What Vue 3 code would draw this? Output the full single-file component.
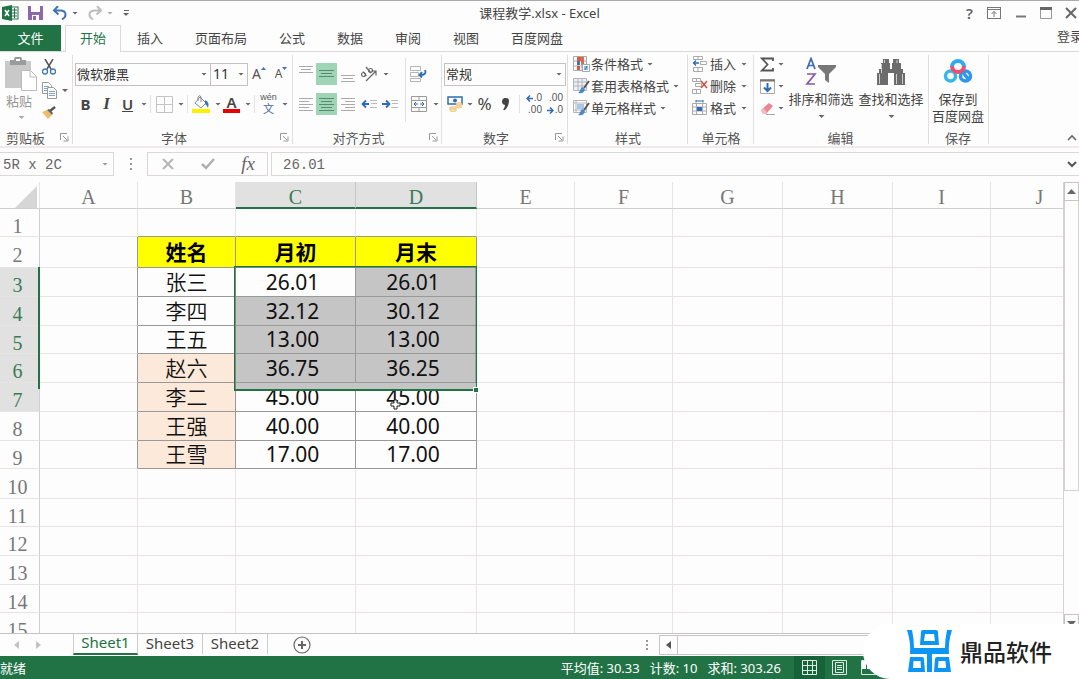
<script setup>
import { ref } from 'vue'

const tabs = ['插入', '页面布局', '公式', '数据', '审阅', '视图', '百度网盘']

const columns = [
  { name: 'A', width: 98 },
  { name: 'B', width: 98 },
  { name: 'C', width: 120 },
  { name: 'D', width: 121 },
  { name: 'E', width: 98 },
  { name: 'F', width: 98 },
  { name: 'G', width: 110 },
  { name: 'H', width: 110 },
  { name: 'I', width: 98 },
  { name: 'J', width: 98 }
]

const heights = [28, 31, 29, 29, 28, 29, 29, 29, 28, 30, 28, 29, 29, 28, 29]

const records = {
  2: ['姓名', '月初', '月末'],
  3: ['张三', '26.01', '26.01'],
  4: ['李四', '32.12', '30.12'],
  5: ['王五', '13.00', '13.00'],
  6: ['赵六', '36.75', '36.25'],
  7: ['李二', '45.00', '45.00'],
  8: ['王强', '40.00', '40.00'],
  9: ['王雪', '17.00', '17.00']
}

const rows = heights.map((height, i) => ({ n: i + 1, height }))

const fontName = ref('微软雅黑')
const fontSize = ref('11')
const numberFormat = ref('常规')
const nameBox = ref('5R x 2C')
const formula = ref('26.01')

function cellText(n, c) {
  const r = records[n]
  return r && c >= 1 && c <= 3 ? r[c - 1] : ''
}

function cellClass(n, c) {
  const inTable = n >= 2 && n <= 9
  return {
    title: n === 2 && c >= 1 && c <= 3,
    peach: c === 1 && n >= 6 && n <= 9,
    number: c >= 2 && c <= 3 && n > 2,
    picked: (c === 3 && n >= 3 && n <= 6) || (c === 2 && n >= 4 && n <= 6),
    'dark-right': inTable && c <= 3,
    'dark-bottom': c >= 1 && c <= 3 && n <= 9
  }
}
</script>

<template>
  <div class="excel">
    <header class="titlebar">
      <div class="quick">
        <svg class="q-logo" width="17" height="16" viewBox="0 0 17 16">
          <rect x="8" y="2" width="8" height="12" fill="#fff" stroke="#217346" />
          <path d="M9 5h6M9 8h6M9 11h6M12.5 3v10" stroke="#217346" />
          <path d="M0 2L10 0v16L0 14z" fill="#217346" />
          <path d="M3 5l4 6M7 5l-4 6" stroke="#fff" stroke-width="1.5" />
        </svg>
        <button aria-label="保存">
          <svg width="15" height="14" viewBox="0 0 15 14">
            <path d="M0 0h15v14H0z" fill="#8d67ac" />
            <path d="M3 0h9v6H3zM4 9h7v5H4z" fill="#fff" />
            <path d="M5 10h3v4H5z" fill="#8d67ac" />
          </svg>
        </button>
        <button aria-label="撤消">
          <svg width="16" height="15" viewBox="0 0 16 15">
            <path d="M6 0L2 4.500l4.500 4M2 4.500h6c7 0 7 6 2 9" fill="none" stroke="#3c76b8" stroke-width="2" />
          </svg>
        </button>
        <i class="caret"></i>
        <button aria-label="恢复" class="redo">
          <svg width="16" height="15" viewBox="0 0 16 15">
            <path d="M10 0l4 4.500-4.500 4M14 4.500H8c-7 0-7 6-2 9" fill="none" stroke="#bcbcbc" stroke-width="2" />
          </svg>
        </button>
        <i class="caret pale"></i>
        <span class="more"><i class="caret"></i></span>
      </div>
      <h1>课程教学.xlsx - Excel</h1>
      <div class="window-buttons">
        <button aria-label="帮助" class="help">?</button>
        <button aria-label="功能区显示选项">
          <svg width="16" height="12" viewBox="0 0 16 12" fill="none" stroke="#777">
            <rect x="1.500" y=".5" width="13" height="11" /><path d="M2 2.500h12M8 10V4.500M5.500 7L8 4.500 10.500 7" />
          </svg>
        </button>
        <button aria-label="最小化">
          <svg width="12" height="12" viewBox="0 0 12 12"><path d="M1 9.500h10" stroke="#777" stroke-width="2" /></svg>
        </button>
        <button aria-label="最大化">
          <svg width="12" height="12" viewBox="0 0 12 12"><path d="M.5 1v10.500h11V1" fill="none" stroke="#999" /><path d="M0 1.500h12" stroke="#666" stroke-width="3" /></svg>
        </button>
        <button aria-label="关闭">
          <svg width="12" height="12" viewBox="0 0 12 12"><path d="M1 1l10 10M11 1L1 11" stroke="#666" stroke-width="2" /></svg>
        </button>
      </div>
    </header>

    <nav class="tabs">
      <button class="file">文件</button>
      <button class="active">开始</button>
      <button v-for="t in tabs" :key="t">{{ t }}</button>
      <a href="#" class="login">登录</a>
    </nav>

    <section class="ribbon">
      <div class="group clipboard">
        <div class="body">
          <button class="paste">
            <svg width="32" height="35" viewBox="0 0 32 35">
              <path d="M0 4h26v27H0z" fill="#c9c9c9" />
              <path d="M5 3h4a4 4 0 0 1 8 0h4v5H5z" fill="#9b9b9b" /><path d="M11 2h4v2h-4z" fill="#fff" />
              <path d="M16.500 13.500h9l6 6v14h-15z" fill="#fff" stroke="#bbb" /><path d="M25 13v7h6" fill="none" stroke="#bbb" />
            </svg>
            <span>粘贴</span>
            <i class="caret pale"></i>
          </button>
          <div class="clip-tools">
            <button aria-label="剪切">
              <svg width="14" height="16" viewBox="0 0 14 16" fill="none">
                <path d="M3 0l6 10M11 0L5 10" stroke="#555" stroke-width="1.500" />
                <circle cx="3" cy="12.500" r="2.500" stroke="#3c76b8" stroke-width="1.300" /><circle cx="11" cy="12.500" r="2.500" stroke="#3c76b8" stroke-width="1.300" />
              </svg>
            </button>
            <button aria-label="复制">
              <svg width="15" height="17" viewBox="0 0 15 17" stroke="#9a9a9a">
                <path d="M.5.5h6l3 3v8h-9z" fill="#fff" /><path d="M2 4.500h5M2 6.500h5M2 8.500h5" stroke="#7fa6d0" />
                <path d="M5.500 5.500h6l3 3v8h-9z" fill="#fff" /><path d="M7 9.500h6M7 11.500h6M7 13.500h6" stroke="#7fa6d0" />
              </svg>
            </button>
            <button aria-label="格式刷">
              <svg width="14" height="13" viewBox="0 0 14 13">
                <path d="M0 6l5-2 5 5-4 4z" fill="#edbd68" /><path d="M5 4l2-1 4 4-1 2z" fill="#666" /><path d="M8 5l5-4" stroke="#555" stroke-width="2.500" />
              </svg>
            </button>
          </div>
          <i class="caret copy-caret"></i>
        </div>
        <footer>剪贴板<svg class="launch" viewBox="0 0 9 9"><path d="M.5 7V.5H7M3 3l4 4M8 3.500V8H3.500" /></svg></footer>
      </div>

      <div class="group font">
        <div class="body lines">
          <div class="line">
            <label class="drop font-name"><select v-model="fontName" aria-label="字体"><option>微软雅黑</option></select><i class="caret"></i></label>
            <label class="drop font-size"><select v-model="fontSize" aria-label="字号"><option>11</option></select><i class="caret"></i></label>
            <button class="grow" aria-label="增大字号">A<svg width="5" height="3" viewBox="0 0 5 3"><path d="M0 3l2.500-3L5 3z" fill="#3c76b8" /></svg></button>
            <button class="grow small" aria-label="减小字号">A<svg width="5" height="3" viewBox="0 0 5 3"><path d="M0 0h5L2.500 3z" fill="#3c76b8" /></svg></button>
          </div>
          <div class="line">
            <button class="w21 bold">B</button>
            <button class="w21 italic">I</button>
            <button class="w21 under">U</button>
            <i class="caret"></i><i class="sep"></i>
            <button class="w21" aria-label="边框">
              <svg width="17" height="17" viewBox="0 0 17 17" fill="none" stroke="#c4c4c4"><path d="M.5.5h16v16H.5zM8.500 1v15M1 8.500h15" /></svg>
            </button>
            <i class="caret"></i><i class="sep"></i>
            <button class="w21" aria-label="填充颜色">
              <svg width="19" height="18" viewBox="0 0 19 18">
                <path d="M0 14h18v4H0z" fill="#fdf000" /><path d="M8 2l6 6-5 5-6-5z" fill="#fff" stroke="#888" /><path d="M6 6V2q2-3 3 0v5" fill="none" stroke="#888" />
                <path d="M13 5q5 2 3 8-1-3-3-4z" fill="#3c76b8" />
              </svg>
            </button>
            <i class="caret"></i>
            <button class="w21 color" aria-label="字体颜色">A</button>
            <i class="caret"></i><i class="sep"></i>
            <button class="w21 pinyin"><small>wén</small><span>文</span></button>
            <i class="caret"></i>
          </div>
        </div>
        <footer>字体<svg class="launch" viewBox="0 0 9 9"><path d="M.5 7V.5H7M3 3l4 4M8 3.500V8H3.500" /></svg></footer>
      </div>

      <div class="group align">
        <div class="body">
          <div class="lines">
            <div class="line">
              <button class="w21" aria-label="顶端对齐"><svg width="14" height="16" viewBox="0 0 14 16" stroke="#aaa"><path d="M0 .5h14M2 3.500h10M0 6.500h14" /></svg></button>
              <button class="w21 on" aria-label="垂直居中"><svg width="15" height="16" viewBox="0 0 15 16" stroke="#5c8a70"><path d="M0 4.500h15M2 7.500h11M0 10.500h15" /></svg></button>
              <button class="w21" aria-label="底端对齐"><svg width="14" height="16" viewBox="0 0 14 16" stroke="#aaa"><path d="M0 9.500h14M2 12.500h10M0 15.500h14" /></svg></button>
              <button class="w21" aria-label="方向">
                <svg width="18" height="16" viewBox="0 0 18 16" fill="none" stroke="#666" stroke-width="1.200">
                  <path d="M6 15L16 5M11.500 5H16v4.500" /><circle cx="3.500" cy="8.500" r="2" /><path d="M3 5.500l3.500 4.500M6 1l5 6" /><circle cx="10.500" cy="4.500" r="2" />
                </svg>
              </button>
              <i class="caret"></i>
            </div>
            <div class="line">
              <button class="w21" aria-label="左对齐"><svg width="14" height="14" viewBox="0 0 14 14" stroke="#aaa"><path d="M0 1.500h14M0 4.500h10M0 7.500h14M0 10.500h10M0 13.500h14" /></svg></button>
              <button class="w21 on" aria-label="居中"><svg width="15" height="14" viewBox="0 0 15 14" stroke="#5c8a70"><path d="M0 1.500h15M2 4.500h11M0 7.500h15M2 10.500h11M0 13.500h15" /></svg></button>
              <button class="w21" aria-label="右对齐"><svg width="14" height="14" viewBox="0 0 14 14" stroke="#aaa"><path d="M0 1.500h14M4 4.500h10M0 7.500h14M4 10.500h10M0 13.500h14" /></svg></button>
              <button class="w21" aria-label="减少缩进量"><svg width="16" height="10" viewBox="0 0 16 10" fill="none"><path d="M8 5H2M5 1.500L1.500 5 5 8.500" stroke="#2f6cb3" stroke-width="1.800" /><path d="M9 1.500h7M10 4.500h6M9 8.500h7" stroke="#bbb" /></svg></button>
              <button class="w21" aria-label="增加缩进量"><svg width="16" height="10" viewBox="0 0 16 10" fill="none"><path d="M0 5h7M4 1.500L7.500 5 4 8.500" stroke="#2f6cb3" stroke-width="1.800" /><path d="M9 1.500h7M10 4.500h6M9 8.500h7" stroke="#bbb" /></svg></button>
            </div>
          </div>
          <div class="lines wrap-block">
            <div class="line">
              <button class="w21" aria-label="自动换行">
                <svg width="17" height="16" viewBox="0 0 17 16" fill="none"><path d="M.5.500h10v4H.5zM.5 6.500h8v4h-8zM.5 12.500h10v3H.5z" stroke="#b4b4b4" /><path d="M15 4q2 5-5 5M12 6L9.500 9l2.500 2.500" stroke="#2f6cb3" stroke-width="1.800" /></svg>
              </button>
            </div>
            <div class="line">
              <button class="w21" aria-label="合并后居中">
                <svg width="16" height="16" viewBox="0 0 16 16" fill="none"><path d="M.5.5h15v15H.5zM1 4.500h14M1 11.500h14M8 1v3M8 12v3" stroke="#9a9a9a" /><path d="M3 8h4M9 8h4M5 6L3 8l2 2M11 6l2 2-2 2" stroke="#2f6cb3" /></svg>
              </button>
              <i class="caret"></i>
            </div>
          </div>
        </div>
        <footer>对齐方式<svg class="launch" viewBox="0 0 9 9"><path d="M.5 7V.5H7M3 3l4 4M8 3.500V8H3.500" /></svg></footer>
      </div>

      <div class="group numbers">
        <div class="body lines">
          <div class="line">
            <label class="drop format"><select v-model="numberFormat" aria-label="数字格式"><option>常规</option></select><i class="caret"></i></label>
          </div>
          <div class="line">
            <button class="w21" aria-label="会计数字格式">
              <svg width="16" height="16" viewBox="0 0 16 16"><path d="M1 1h14v7H1z" fill="#fff" stroke="#2f6cb3" stroke-width="1.500" /><circle cx="8" cy="4.500" r="2" fill="#2f6cb3" /><g fill="#f9dfa8" stroke="#e8b967" stroke-width=".6"><ellipse cx="12" cy="8" rx="3" ry="1.500" /><ellipse cx="12" cy="10.500" rx="3" ry="1.500" /><ellipse cx="6" cy="12" rx="3.500" ry="1.500" /><ellipse cx="6" cy="14" rx="3.500" ry="1.500" /></g></svg>
            </button>
            <i class="caret tight"></i>
            <button class="w21 percent">%</button>
            <button class="w21" aria-label="千位分隔样式"><svg width="8" height="12" viewBox="0 0 8 12"><path d="M4 0a3 3 0 0 1 3 3c0 4-2 7-4 9H1c1-2 2-3 2-5a3.200 3.200 0 0 1 1-7" fill="#444" /></svg></button>
            <i class="sep"></i>
            <button class="w21 decimals">
              <span><svg width="7" height="7" viewBox="0 0 7 7" fill="none"><path d="M7 3.500H1.500M4 .5l-3 3 3 3" stroke="#2f6cb3" stroke-width="1.500" /></svg>.0</span><span>.00</span>
            </button>
            <button class="w21 decimals">
              <span>.00</span><span><svg width="7" height="7" viewBox="0 0 7 7" fill="none"><path d="M0 3.500h5.500M3 .5l3 3-3 3" stroke="#2f6cb3" stroke-width="1.500" /></svg>.0</span>
            </button>
          </div>
        </div>
        <footer>数字<svg class="launch" viewBox="0 0 9 9"><path d="M.5 7V.5H7M3 3l4 4M8 3.500V8H3.500" /></svg></footer>
      </div>

      <div class="group styles">
        <div class="body stack">
          <button>
            <svg width="17" height="16" viewBox="0 0 17 16"><path d="M.5.5h13v14H.5zM1 5h12M1 10h12M5 1v13M9 1v13" fill="#fff" stroke="#aaa" /><path d="M4 1h4v4H4zM4 10h3v4H4z" fill="#df5a3c" /><path d="M8 1h3v8H8z" fill="#d56a55" /><path d="M4 5h3v4H4z" fill="#3f75b5" /><path d="M9.500 8.500h7v7h-7z" fill="#fff" stroke="#9ab" /><path d="M11 11h4M11 13h4M14 10l-2 4" stroke="#3f75b5" /></svg>
            <span>条件格式</span><i class="caret"></i>
          </button>
          <button>
            <svg width="17" height="16" viewBox="0 0 17 16"><path d="M.5.5h13v12H.5zM1 4h12M1 8h12M5 1v11M9 1v11" fill="#e9f0f8" stroke="#b4b4b4" /><path d="M16 3l-5 7" stroke="#555" stroke-width="2" /><path d="M9 9l3 2c-1 4-3 5-7 4 2-1 2-4 4-6" fill="#4d89c4" /></svg>
            <span>套用表格格式</span><i class="caret"></i>
          </button>
          <button>
            <svg width="17" height="16" viewBox="0 0 17 16"><path d="M.5.5h13v12H.5zM1 3h12M1 10h12M3 1v11" fill="#fff" stroke="#b4b4b4" /><path d="M4 4h7v5H4z" fill="#a9c7e6" /><path d="M16 3l-5 7" stroke="#555" stroke-width="2" /><path d="M9 9l3 2c-1 4-3 5-7 4 2-1 2-4 4-6" fill="#4d89c4" /></svg>
            <span>单元格样式</span><i class="caret"></i>
          </button>
        </div>
        <footer>样式</footer>
      </div>

      <div class="group cells">
        <div class="body stack">
          <button>
            <svg width="16" height="16" viewBox="0 0 16 16" fill="none"><path d="M1.500.5h9v3h-9zM6 1v3M1.500 11.500h9v4h-9zM6 12v4M8.500 5.500h6v3h-6z" stroke="#aaa" /><path d="M7 7H1M4 4.500L1.500 7 4 9.500" stroke="#2f6cb3" stroke-width="1.300" /></svg>
            <span>插入</span><i class="caret"></i>
          </button>
          <button>
            <svg width="16" height="16" viewBox="0 0 16 16" fill="none"><path d="M.5.5h8v3h-8zM4.500 1v3M.5 11.500h8v4h-8zM4.500 12v4M3.500 5.500h6v3h-6z" stroke="#aaa" /><path d="M9 3l6 7M15 3L9 10" stroke="#d94b3d" stroke-width="1.500" /></svg>
            <span>删除</span><i class="caret"></i>
          </button>
          <button>
            <svg width="16" height="16" viewBox="0 0 16 16" fill="none"><path d="M.5 3.500h14v11H.5zM1 7h14M1 11h14M4.500 4v10M10.500 4v10" stroke="#aaa" /><path d="M5 7h5v4H5z" fill="#2f6cb3" /><path d="M4 1h7M4 0v2.500M11 0v2.500" stroke="#2f6cb3" /></svg>
            <span>格式</span><i class="caret"></i>
          </button>
        </div>
        <footer>单元格</footer>
      </div>

      <div class="group edit">
        <div class="body">
          <div class="stack">
            <button aria-label="自动求和"><svg width="15" height="15" viewBox="0 0 15 15"><path d="M13 4V1.500H2L7.500 7.500 2 13.500h11V11" fill="none" stroke="#555" stroke-width="1.800" /></svg><i class="caret"></i></button>
            <button aria-label="填充"><svg width="15" height="15" viewBox="0 0 15 15" fill="none"><path d="M.5.5h14v14H.5z" stroke="#aaa" /><path d="M0 1.500h15" stroke="#777" stroke-width="2" /><path d="M7.500 4v8M4 8.500L7.500 12 11 8.500" stroke="#2f6cb3" stroke-width="2" /></svg><i class="caret"></i></button>
            <button aria-label="清除"><svg width="15" height="13" viewBox="0 0 15 13"><path d="M1 8l8-7 4 3-7 8H3z" fill="#ea8791" /><path d="M1 8l2-2 4 4-2 2H3z" fill="#f6bcc2" /><path d="M6 12.500h9" stroke="#aaa" /></svg><i class="caret"></i></button>
          </div>
          <button class="big">
            <svg width="32" height="30" viewBox="0 0 32 30" fill="none">
              <path d="M2 12L6 1.500 10 12M3.500 8.500h5" stroke="#3c68b2" stroke-width="1.700" /><path d="M2 17h8L2 27h8" stroke="#8a56a8" stroke-width="1.700" />
              <path d="M13 8h18v2l-7 7v9l-4-3v-6l-7-7z" fill="#777" />
            </svg>
            <span>排序和筛选</span><i class="caret"></i>
          </button>
          <button class="big">
            <svg width="30" height="30" viewBox="0 0 30 30">
              <path d="M7 2h6v4h1v6h2V6h1V2h6v4h2v6h2v4h2v12H18V16h-6v12H1V16h2v-4h2V6h2z" fill="#6c6c6c" /><path d="M3.500 17v10M5.500 7v9M8.500 3v3M20.500 17v10M26.500 17v10M21 3v3" stroke="#ccc" />
            </svg>
            <span>查找和选择</span><i class="caret"></i>
          </button>
        </div>
        <footer>编辑</footer>
      </div>

      <div class="group save">
        <div class="body">
          <button class="big">
            <svg width="30" height="30" viewBox="0 0 30 30" fill="none" stroke-width="3.500">
              <path d="M9 10a6 6 0 0 1 12 0" stroke="#2eaaf0" stroke-width="4" /><circle cx="7.500" cy="19" r="5" stroke="#35b8e8" /><circle cx="22.500" cy="19" r="5" stroke="#2d96ee" />
              <path d="M19 14l7 9" stroke="#2d96ee" /><path d="M21 9a6 6 0 0 1-12 0" stroke="#ee4f6e" stroke-width="4" />
            </svg>
            <span>保存到<br>百度网盘</span>
          </button>
        </div>
        <footer>保存</footer>
      </div>

      <button class="collapse" aria-label="折叠功能区"><svg width="10" height="7" viewBox="0 0 10 7"><path d="M1 6l4-4 4 4" fill="none" stroke="#666" stroke-width="1.600" /></svg></button>
    </section>

    <section class="formula-bar">
      <label class="name-box"><input v-model="nameBox" aria-label="名称框"><i class="caret"></i></label>
      <span class="dots"><svg width="2" height="12" viewBox="0 0 2 12"><path d="M0 1h2M0 6h2M0 11h2" stroke="#999" stroke-width="2" /></svg></span>
      <div class="fx">
        <button aria-label="取消"><svg width="12" height="12" viewBox="0 0 12 12"><path d="M1 1l10 10M11 1L1 11" stroke="#b5b5b5" stroke-width="2" /></svg></button>
        <button aria-label="输入"><svg width="14" height="12" viewBox="0 0 14 12"><path d="M1 6l4 4 8-9" fill="none" stroke="#b0b0b0" stroke-width="2.500" /></svg></button>
        <button class="fn">fx</button>
      </div>
      <input v-model="formula" class="formula" aria-label="编辑栏">
      <button class="expand" aria-label="展开编辑栏"><svg width="10" height="7" viewBox="0 0 10 7"><path d="M1 1l4 4 4-4" fill="none" stroke="#555" stroke-width="2" /></svg></button>
    </section>

    <main class="sheet-area">
      <div class="sheet">
        <table>
          <colgroup>
            <col class="row-col">
            <col v-for="c in columns" :key="c.name" :style="{ width: c.width + 'px' }">
          </colgroup>
          <thead>
            <tr>
              <th class="corner"><svg width="22" height="22" viewBox="0 0 22 22"><path d="M22 0v22H0z" fill="#d6d6d6" /></svg></th>
              <th v-for="c in columns" :key="c.name" :class="{ chosen: c.name === 'C' || c.name === 'D' }">{{ c.name }}</th>
            </tr>
          </thead>
          <tbody>
            <tr v-for="r in rows" :key="r.n" :style="{ height: r.height + 'px' }">
              <th :class="{ chosen: r.n >= 3 && r.n <= 7 }">{{ r.n }}</th>
              <td v-for="(c, i) in columns" :key="c.name" :class="cellClass(r.n, i)">{{ cellText(r.n, i) }}</td>
            </tr>
          </tbody>
        </table>
        <div class="row-marker"></div>
        <div class="selection"><div class="strip"></div><div class="handle"></div></div>
        <svg class="cursor" width="11" height="11" viewBox="0 0 11 11"><path d="M4 1h3v3h3v3H7v3H4V7H1V4h3z" fill="#fff" stroke="#222" /></svg>
      </div>
      <div class="vscroll">
        <button aria-label="向上滚动"><svg width="9" height="5" viewBox="0 0 9 5"><path d="M0 5l4.500-5L9 5z" fill="#666" /></svg></button>
        <div class="thumb"></div>
        <button class="down" aria-label="向下滚动"><svg width="9" height="5" viewBox="0 0 9 5"><path d="M0 0h9L4.500 5z" fill="#666" /></svg></button>
      </div>
    </main>

    <section class="sheet-tabs">
      <div class="arrows">
        <svg width="5" height="8" viewBox="0 0 5 8"><path d="M5 0v8L0 4z" fill="#c2c2c2" /></svg>
        <svg width="5" height="8" viewBox="0 0 5 8"><path d="M0 0v8l5-4z" fill="#c2c2c2" /></svg>
      </div>
      <button class="current">Sheet1</button>
      <button>Sheet3</button>
      <button>Sheet2</button>
      <button class="add" aria-label="新工作表"><svg width="18" height="18" viewBox="0 0 18 18" fill="none" stroke="#666"><circle cx="9" cy="9" r="8" stroke-width="1.200" /><path d="M9 5v8M5 9h8" stroke-width="2" /></svg></button>
      <span class="grip"><svg width="2" height="10" viewBox="0 0 2 10"><path d="M0 1h2M0 5h2M0 9h2" stroke="#999" stroke-width="2" /></svg></span>
      <div class="hscroll">
        <button aria-label="向左滚动"><svg width="5" height="8" viewBox="0 0 5 8"><path d="M5 0v8L0 4z" fill="#555" /></svg></button>
      </div>
    </section>

    <footer class="status">
      <span class="ready">就绪</span>
      <span>平均值: 30.33</span>
      <span>计数: 10</span>
      <span>求和: 303.26</span>
      <div class="views">
        <button class="current" aria-label="普通"><svg width="15" height="15" viewBox="0 0 15 15" fill="none" stroke="#dcebe2"><path d="M.5.5h14v14H.5zM1 5.500h13M1 10.500h13M5.500 1v13M10.500 1v13" /></svg></button>
        <button aria-label="页面布局"><svg width="15" height="15" viewBox="0 0 15 15" fill="none" stroke="#dcebe2"><path d="M.5.5h14v14H.5zM3.500 2.500h8v10h-8zM5 5.500h5M5 7.500h5M5 9.500h5" /></svg></button>
        <button aria-label="分页预览"><svg width="15" height="15" viewBox="0 0 15 15" fill="none"><path d="M.5.5h14v14H.5z" stroke="#dcebe2" /><path d="M1 1h4v8H1zM6 1h4v8H6z" fill="#fff" /></svg></button>
      </div>
    </footer>

    <div class="brand">
      <svg width="45" height="43" viewBox="0 0 45 43" fill="#0b95f5">
        <path d="M0 0h5q2 9 2 18h31q0-9 2-18h5q-4 12-3 24H25v18h-5V24H3Q4 12 0 0z" />
        <path fill-rule="evenodd" d="M16 0h13q2 0 2 2l1 13H13l1-13q0-2 2-2zM18 4l-1 7h11l-1-7z" />
        <path fill-rule="evenodd" d="M3 27h12q2 0 2 2l1 13H1zM6.500 31L6 38h8l-.5-7z" />
        <path fill-rule="evenodd" d="M30 27h12l2 15H27l1-13q0-2 2-2zM31.500 31l-.5 7h8l-.5-7z" />
      </svg>
      <strong>鼎品软件</strong>
    </div>
  </div>
</template>

<style>
body { margin: 0; overflow: hidden; }
</style>

<style scoped>
.excel {
  position: relative;
  display: flex;
  flex-direction: column;
  height: 100vh;
  overflow: hidden;
  box-sizing: border-box;
  border-top: 1px solid #aaa;
  background: #fdfdfd;
  color: #444;
  font: 13px/18px "Noto Sans", "Noto Sans CJK SC", sans-serif;
}
.excel * { box-sizing: border-box; }
button, input, select {
  margin: 0;
  padding: 0;
  border: 0;
  background: none;
  color: inherit;
  font: inherit;
}
button {
  display: flex;
  align-items: center;
  justify-content: center;
  flex: none;
  white-space: nowrap;
}
svg { display: block; flex: none; }
.caret {
  flex: none;
  width: 13px;
  height: 3px;
  background: #666;
  clip-path: polygon(4px 0, 10px 0, 7px 3px);
}
.caret.pale { background: #aaa; }
.sep { width: 1px; height: 18px; margin: 0 3px; background: #e5e1e1; }

/* title bar */
.titlebar { display: flex; align-items: center; height: 24px; flex: none; position: relative; }
.quick { display: flex; align-items: center; flex: 1; padding-left: 2px; }
.quick button { margin-left: 9px; }
.quick .redo { margin-left: 6px; }
.quick .more { margin-left: 3px; padding-top: 3px; position: relative; }
.more .caret { display: block; }
.more::before { content: ""; position: absolute; left: 5px; top: 0; width: 5px; height: 1px; background: #666; }
h1 { margin: 0; font-size: 13px; font-weight: 400; line-height: 18px; }
.window-buttons { flex: 1; display: flex; align-items: center; justify-content: flex-end; gap: 13px; padding-right: 2px; }
.help { font-size: 15px; font-weight: 600; color: #666; }

/* ribbon tabs */
.tabs { display: flex; height: 27px; flex: none; border-bottom: 1px solid #dcd8d8; }
.tabs button { padding: 0 16px; height: 25px; }
.tabs .file { width: 61px; height: 26px; margin-right: 4px; background: #217346; color: #fff; }
.tabs .active { width: 56px; height: 27px; padding: 0 0 2px; border: 1px solid #dcd8d8; border-bottom: 0; background: #fdfdfd; color: #217346; }
.login { margin-left: auto; width: 22px; overflow: hidden; white-space: nowrap; line-height: 22px; color: #444; text-decoration: none; }

/* ribbon */
.ribbon { display: flex; height: 96px; flex: none; border-bottom: 2px solid #f3e8ea; }
.group { display: flex; flex-direction: column; flex: none; position: relative; }
.group::after { content: ""; position: absolute; right: 0; top: 3px; bottom: 2px; width: 1px; background: #e3dede; }
.body { display: flex; height: 76px; }
.group footer { height: 18px; text-align: center; color: #555; line-height: 20px; }
.launch { position: absolute; right: 4px; bottom: 4px; width: 9px; height: 9px; fill: none; stroke: #999; }
.lines { display: flex; flex-direction: column; gap: 6px; padding-top: 10px; }
.line { display: flex; align-items: center; height: 24px; }
.w21 { width: 21px; height: 22px; }
.on { background: #9fd5b7; }
.stack { display: flex; flex-direction: column; padding-top: 1px; }
.stack button { height: 22px; justify-content: flex-start; }
.clipboard { width: 73px; }
.clipboard .body { padding-left: 5px; }
.clipboard footer { text-align: left; padding-left: 6px; }
.paste { flex-direction: column; justify-content: flex-start; padding-top: 5px; width: 32px; color: #999; }
.paste span { line-height: 18px; margin-left: -4px; }
.paste .caret { margin-top: 6px; }
.clip-tools { display: flex; flex-direction: column; align-items: center; gap: 7px; width: 20px; margin-left: 2px; padding-top: 7px; }
.copy-caret { margin: 37px 0 0 -1px; }
.font { width: 220px; }
.font .lines, .numbers .lines { padding-left: 2px; }
.font footer { padding-right: 18px; }
.font .line > .caret { width: 11px; margin: 0 -1px; }
.drop { position: relative; display: flex; align-items: center; height: 23px; border: 1px solid #c6c2c2; }
.drop select { appearance: none; flex: 1; width: 100%; height: 21px; padding-left: 1px; color: #333; }
.drop .caret { position: absolute; right: 0; }
.font-size { width: 37px; border-left: 0; }
.font-name { width: 136px; }
.font-size select { padding-left: 2px; font-size: 14px; }
.grow { width: 22px; font-size: 14px; color: #555; }
.grow svg { margin-bottom: 12px; }
.grow.small { font-size: 12px; }
.bold { font-size: 15px; font-weight: 700; }
.italic { font: italic 700 17px "Liberation Serif", serif; }
.under { font-size: 15px; text-decoration: underline; font-weight: 600; }
.color { width: 17px; height: 18px; margin: 0 2px; border-bottom: 4px solid #e60000; font-size: 15px; font-weight: 600; line-height: 14px; }
.pinyin { flex-direction: column; height: 24px; font: 11px/13px "Liberation Sans", "Noto Sans CJK SC", sans-serif; color: #3c68a2; }
.pinyin small { font-size: 9px; line-height: 11px; color: #555; }
.align { width: 149px; }
.align .body { padding-left: 2px; }
.align footer { padding-right: 18px; }
.wrap-block { position: relative; width: 37px; margin-left: auto; padding-left: 3px; }
.wrap-block::before { content: ""; position: absolute; left: 0; top: 6px; bottom: 6px; width: 1px; background: #e3dede; }
.numbers { width: 126px; }
.numbers footer { padding-right: 18px; }
.format { width: 122px; }
.tight { margin: 0 -2px; }
.percent { font-size: 17px; }
.numbers .decimals { flex-direction: column; align-items: flex-end; height: 24px; padding-right: 2px; font: 10px/12px "Liberation Sans", sans-serif; color: #555; }
.decimals span { display: flex; align-items: center; gap: 1px; }
.styles { width: 120px; }
.styles .body { padding-left: 5px; }
.styles .stack svg { margin-right: 1px; }
.cells { width: 66px; }
.cells .body { padding-left: 4px; }
.cells .stack svg { margin-right: 2px; }
.cells .stack .caret { margin-left: 1px; }
.edit { width: 175px; }
.edit footer { padding-right: 2px; }
.edit .body { padding-left: 6px; }
.edit .stack { width: 26px; }
.edit .stack .caret { margin-left: -1px; }
.big { flex-direction: column; justify-content: flex-start; height: 76px; width: 70px; padding-top: 5px; line-height: 17px; }
.big span { padding-top: 4px; }
.big .caret { margin-top: 7px; }
.save { width: 60px; }
.save footer { padding-right: 2px; }
.save .big { width: 58px; }
.collapse { margin: auto 2px 5px auto; }

/* formula bar */
.formula-bar { display: flex; height: 24px; flex: none; margin-top: 4px; color: #666; font-family: "Liberation Mono", monospace; font-size: 14px; }
.name-box { display: flex; align-items: center; width: 114px; border: 1px solid #dcd8d8; border-left: 0; }
.name-box input { flex: 1; min-width: 0; padding: 2px 0 0 3px; }
.name-box .caret { margin-right: 2px; background: #999; }
.dots { display: flex; align-items: center; justify-content: center; width: 33px; }
.fx { display: flex; width: 121px; border: 1px solid #dcd8d8; }
.fx button { width: 40px; }
.fx .fn { font: italic 19px "Liberation Serif", serif; }
.formula { flex: 1; min-width: 0; margin-left: 3px; padding: 2px 0 0 11px; border: 1px solid #dcd8d8; border-right: 0; }
.expand { width: 14px; border-top: 1px solid #dcd8d8; border-bottom: 1px solid #dcd8d8; }

/* worksheet */
.sheet-area { display: flex; flex: 1; min-height: 0; padding-top: 6px; }
.sheet { position: relative; flex: 1; min-width: 0; overflow: hidden; }
table { width: 1089px; table-layout: fixed; border-spacing: 0; }
.row-col { width: 40px; }
th, td { padding: 0; border-right: 1px solid #e8e4e4; border-bottom: 1px solid #e8e4e4; text-align: center; line-height: 20px; }
thead tr { height: 27px; }
th { font: 20px/20px "Liberation Serif", serif; color: #777; }
thead th { padding-top: 3px; border-bottom-color: #cfcfcf; }
tbody th { padding: 6px 4px 0 0; border-right-color: #cfcfcf; }
.corner svg { margin: 0 2px 0 auto; }
th.chosen { background: #e1e1e1; color: #3b7a58; }
thead th.chosen { padding-top: 4px; border-bottom: 2px solid #217346; border-right-color: #c8c8c8; }
td { padding-bottom: 1px; font-size: 21px; color: #111; font-weight: 350; }
td.title { padding-bottom: 0; background: #ff0; color: #000; font-weight: 700; }
.peach { background: #fce9d9; }
td.number { padding-right: 6px; font-weight: 400; }
.picked { background: #c5c5c5; }
.dark-right { border-right-color: #999; }
.dark-bottom { border-bottom-color: #999; }
.selection { position: absolute; left: 234px; top: 84px; width: 243px; height: 125px; border: 1px solid #217346; border-bottom-width: 2px; box-shadow: inset 0 0 0 1px #21734655; }
.strip { position: absolute; left: 1px; right: 1px; bottom: 0; height: 6px; background: #c5c5c5; }
.handle { position: absolute; right: -2px; bottom: -3px; width: 4px; height: 4px; background: #217346; outline: 1px solid #fff; }
.row-marker { position: absolute; left: 38px; top: 85px; width: 2px; height: 122px; background: #217346; }
.cursor { position: absolute; left: 390px; top: 217px; }
.vscroll { display: flex; flex-direction: column; width: 16px; border-left: 1px solid #d6d2d2; }
.vscroll button { height: 19px; border: 1px solid #c8c4c4; }
.thumb { height: 290px; border: 1px solid #d6d2d2; border-top: 0; }
.vscroll .down { margin-top: auto; }

/* sheet tabs */
.sheet-tabs { display: flex; height: 23px; flex: none; border-top: 1px solid #c4c4c4; font-size: 15px; }
.sheet-tabs > button { width: 65px; height: 20px; padding-bottom: 3px; border-right: 1px solid #ccc; }
.sheet-tabs > .current { height: 21px; border-left: 1px solid #ccc; border-bottom: 2px solid #217346; color: #217346; }
.arrows { display: flex; align-items: center; gap: 17px; width: 73px; padding-left: 14px; }
.sheet-tabs > .add { width: 68px; height: 22px; padding: 0; border: 0; }
.grip { display: flex; align-items: center; justify-content: center; width: 24px; margin-left: auto; }
.hscroll { width: 420px; height: 20px; margin-top: 1px; border: 1px solid #c8c4c4; border-right: 0; }
.hscroll button { width: 18px; height: 18px; border-right: 1px solid #c8c4c4; }

/* status bar */
.status { display: flex; align-items: center; gap: 10px; height: 23px; flex: none; padding-right: 196px; background: #217346; color: #fff; }
.ready { margin-right: auto; }
.views { display: flex; height: 23px; margin-left: 3px; }
.views button { width: 29px; }
.views .current { width: 31px; background: #176339; }

/* vendor badge */
.brand { position: absolute; right: 0; bottom: 0; display: flex; align-items: center; gap: 8px; width: 216px; height: 55px; padding-left: 44px; border-radius: 28px 0 0 28px; background: #fff; color: #222; }
.brand strong { font-size: 23px; font-weight: 500; line-height: 30px; }
</style>
